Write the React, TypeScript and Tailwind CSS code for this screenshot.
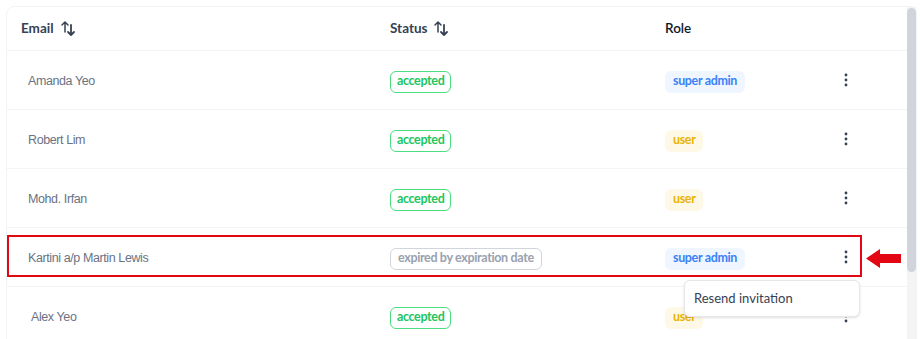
import { useState } from "react";

type Member = {
    name: string;
    status: "accepted" | "expired";
    role: "super admin" | "user";
    indent?: boolean;
};

const members: Member[] = [
    { name: "Amanda Yeo", status: "accepted", role: "super admin" },
    { name: "Robert Lim", status: "accepted", role: "user" },
    { name: "Mohd. Irfan", status: "accepted", role: "user" },
    { name: "Kartini a/p Martin Lewis", status: "expired", role: "super admin" },
    { name: "Alex Yeo", status: "accepted", role: "user", indent: true },
];

const SortIcon = () => (
    <svg className="w-[17px] h-[17px] text-gray-700" viewBox="0 0 17 17" fill="none" stroke="currentColor" strokeLinecap="round" strokeLinejoin="round">
        {/* up arrow */}
        <path d="M5 12V2M2 5l3-3 3 3" strokeWidth={1.5} />
        {/* down arrow */}
        <path d="M11 5v10M8 12l3 3 3-3" strokeWidth={1.8} />
    </svg>
);

const Kebab = () => (
    <svg className="w-[4px] h-[14px] text-gray-700" viewBox="0 0 4 14" fill="currentColor">
        <circle cx="2" cy="2" r="1.4" />
        <circle cx="2" cy="7" r="1.4" />
        <circle cx="2" cy="12" r="1.4" />
    </svg>
);

const badge = "inline-flex items-center h-[22px] rounded-md text-[12.5px] font-bold leading-none tracking-[-0.35px]";

const StatusBadge = ({ status }: { status: Member["status"] }) =>
    status === "accepted" ? (
        <span className={`${badge} px-[6px] border border-[#4ade80] text-[#22c55e]`}>accepted</span>
    ) : (
        <span className={`${badge} px-[7px] border border-gray-300 text-gray-400`}>expired by expiration date</span>
    );

const RoleBadge = ({ role }: { role: Member["role"] }) =>
    role === "super admin" ? (
        <span className={`${badge} px-[8px] bg-[#eff6ff] text-[#3b82f6]`}>super admin</span>
    ) : (
        <span className={`${badge} px-[8px] bg-[#fef9e7] text-[#eab308]`}>user</span>
    );

export default function App() {
    const [openRow] = useState(3);

    return (
        <div className="w-[920px] h-[339px] bg-white overflow-hidden pt-[6px] pl-[6px] pr-[3px] font-['Lato',sans-serif]">
            <div className="relative flex h-[340px] border border-gray-100 rounded-tl-lg rounded-tr-md">
                {/* Table */}
                <div className="flex-1 flex flex-col">
                    {/* Header */}
                    <div className="flex items-center h-[44px] shrink-0 border-b border-gray-100 text-[13.5px] font-bold text-gray-700">
                        <div className="w-[383px] pl-[14px] flex items-center gap-[6px]">
                            Email <SortIcon />
                        </div>
                        <div className="w-[275px] flex items-center gap-[6px]">
                            Status <SortIcon />
                        </div>
                        <div className="flex-1 font-semibold text-gray-900">Role</div>
                    </div>

                    {/* Rows */}
                    {members.map((m, i) => (
                        <div
                            key={m.name}
                            className="relative flex items-center h-[59px] shrink-0 border-b border-gray-100"
                        >
                            <div
                                className={`w-[383px] pt-[2px] text-[12.5px] tracking-[-0.4px] text-gray-500 font-['Liberation_Sans',Arial,sans-serif] ${
                                    m.indent ? "pl-[24px]" : "pl-[21px]"
                                }`}
                            >
                                {m.name}
                            </div>
                            <div className="w-[275px]">
                                <StatusBadge status={m.status} />
                            </div>
                            <div className="w-[174px]">
                                <RoleBadge role={m.role} />
                            </div>
                            <button className="w-[14px] h-[20px] flex items-center justify-center">
                                <Kebab />
                            </button>

                            {i === openRow && (
                                <>
                                    {/* highlight annotation */}
                                    <div className="absolute left-0 top-[7px] w-[855px] h-[42px] border-2 border-[#e30613] pointer-events-none" />
                                    {/* dropdown */}
                                    <div className="absolute left-[677px] top-[52px] z-10 w-[176px] h-[37px] flex items-center px-[9px] bg-white border border-gray-200 rounded-md shadow-sm text-[13px] text-gray-700">
                                        Resend invitation
                                    </div>
                                </>
                            )}
                        </div>
                    ))}
                </div>

                {/* Scrollbar */}
                <div className="w-[9px] shrink-0 bg-[#f3f4f6] pt-[1px]">
                    <div className="h-[264px] rounded-full bg-[#d1d5db]" />
                </div>

                {/* arrow annotation */}
                <svg className="absolute left-[859px] top-[242px] w-[35px] h-[19px]" viewBox="0 0 35 19">
                    <path d="M0 9.5L14 0v5h21v9H14v5z" fill="#e30613" />
                </svg>
            </div>
        </div>
    );
}
